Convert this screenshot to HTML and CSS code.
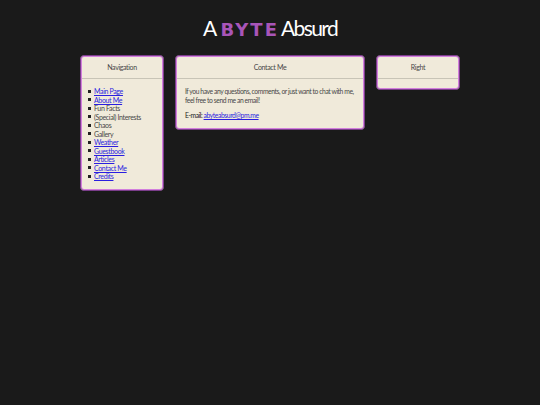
FILE: index.html
```html
<!DOCTYPE html>
<html lang="en">
<head>
<meta charset="utf-8">
<title>A BYTE Absurd</title>
<link rel="stylesheet" href="styles.css">
</head>
<body>
<h1 class="title">A <span class="byte">BYTE</span> Absurd</h1>
<div class="layout">
  <aside class="panel panel-side">
    <h2 class="panel-head">Navigation</h2>
    <div class="panel-body panel-body-nav">
      <ul class="nav">
        <li><a href="#">Main Page</a></li>
        <li><a href="#">About Me</a></li>
        <li>Fun Facts</li>
        <li>(Special) Interests</li>
        <li>Chaos</li>
        <li>Gallery</li>
        <li><a href="#">Weather</a></li>
        <li><a href="#">Guestbook</a></li>
        <li><a href="#">Articles</a></li>
        <li><a href="#">Contact Me</a></li>
        <li><a href="#">Credits</a></li>
      </ul>
    </div>
  </aside>
  <main class="panel panel-main">
    <h2 class="panel-head">Contact Me</h2>
    <div class="panel-body">
      <p class="text">If you have any questions, comments, or just want to chat with me,<br>feel free to send me an email!</p>
      <p class="text email"><span class="dark">E-mail:</span> <a href="#">abyteabsurd@pm.me</a></p>
    </div>
  </main>
  <aside class="panel panel-side">
    <h2 class="panel-head">Right</h2>
    <div class="panel-spacer"></div>
  </aside>
</div>
</body>
</html>
```
FILE: styles.css
```css
html, body { margin: 0; padding: 0; }
body {
  min-height: 405px;
  background: #1a1a1a;
  font-family: Lato, "Liberation Sans", sans-serif;
  font-size: 7px;
  letter-spacing: -0.35px;
  color: #484848;
}
.title {
  margin: 0;
  height: 55px;
  padding-top: 14px;
  box-sizing: border-box;
  text-align: center;
  font-size: 21px;
  line-height: 28px;
  font-weight: 400;
  letter-spacing: -1.6px;
  word-spacing: 2px;
  color: #fff;
}
.byte {
  margin-right: -3px;
  font-family: "DejaVu Sans", sans-serif;
  font-weight: 700;
  font-size: 18px;
  letter-spacing: 2px;
  color: #a855b8;
}
.layout {
  width: 380px;
  margin: 0 auto;
  display: flex;
  align-items: flex-start;
  gap: 11px;
}
.panel {
  box-sizing: border-box;
  background: #f0eada;
  border: 1px solid #7a3d8a;
  box-shadow: inset 0 0 0 1px #d27fdc;
  border-radius: 4px;
}
.panel-side { width: 84px; flex: none; }
.panel-main { flex: 1; }
.panel-head {
  margin: 1px 1px 0;
  height: 21px;
  line-height: 21px;
  text-align: center;
  font-size: 7px;
  font-weight: 400;
  border-bottom: 1px solid #c8c4b6;
}
.panel-body { padding: 8px 3px 9px 9px; }
.panel-body-nav { padding-left: 6.5px; }
.panel-spacer { height: 10px; }
.nav { margin: 0; padding: 0; list-style: none; }
.nav li { display: flex; align-items: center; gap: 3.5px; height: 8.5px; line-height: 8.5px; white-space: nowrap; }
.nav li::before { content: ""; width: 3px; height: 3px; background: #222; flex: none; }
.text { margin: 0; font-size: 6.75px; line-height: 8.5px; letter-spacing: -0.42px; }
.email { margin-top: 7px; }
.dark { color: #222; }
a { color: #2a1ee0; }
```
